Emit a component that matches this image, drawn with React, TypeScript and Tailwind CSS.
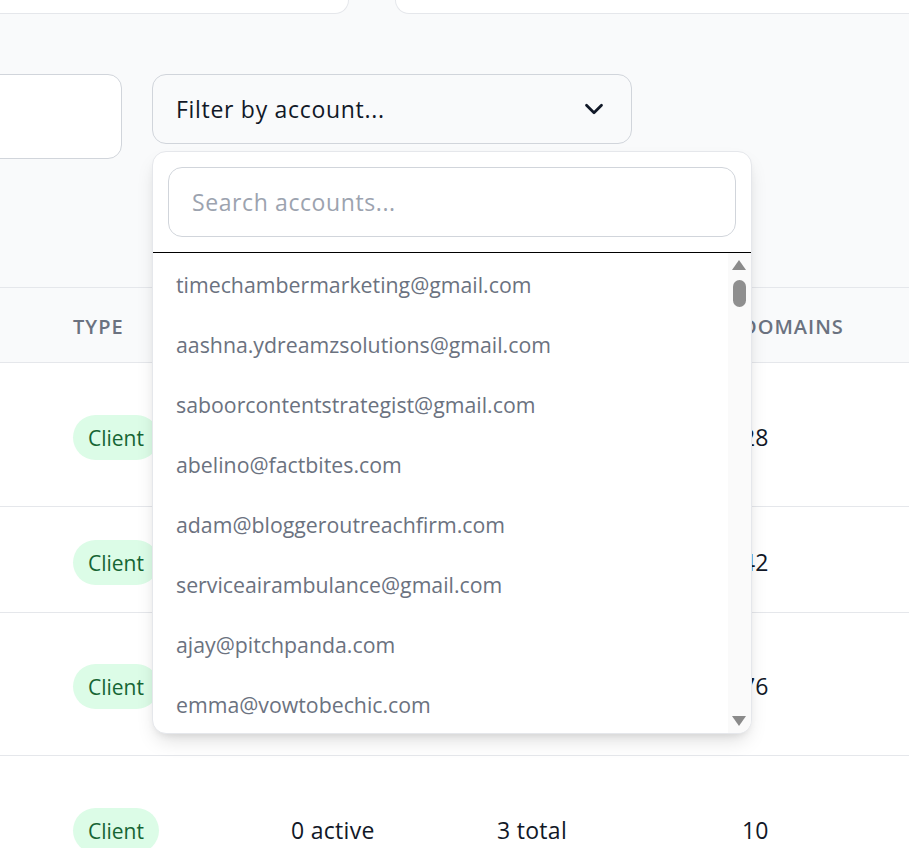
import React from "react";

const emails = [
  "timechambermarketing@gmail.com",
  "aashna.ydreamzsolutions@gmail.com",
  "saboorcontentstrategist@gmail.com",
  "abelino@factbites.com",
  "adam@bloggeroutreachfirm.com",
  "serviceairambulance@gmail.com",
  "ajay@pitchpanda.com",
  "emma@vowtobechic.com",
];

const rows = [
  { h: "h-[144px] pt-[5px]", active: "", total: "", domains: "28" },
  { h: "h-[106px] pt-[5px]", active: "", total: "", domains: "42" },
  { h: "h-[143px] pt-[5px]", active: "", total: "", domains: "76" },
  { h: "h-[148px] pt-[1px]", active: "0 active", total: "3 total", domains: "10" },
];

function Badge() {
  return (
    <span className="inline-flex h-[45px] items-center rounded-full bg-[#dcfce7] px-[15px] pt-[3px] text-[21px] text-[#166534]">
      Client
    </span>
  );
}

export default function App() {
  return (
    <div
      className="relative h-[848px] w-[909px] overflow-hidden bg-[#f9fafb]"
      style={{ fontFamily: '"Open Sans", "Noto Sans", sans-serif' }}
    >
      {/* top cards */}
      <div className="flex h-[14px] gap-[46px]">
        <div className="-ml-[30px] h-[14px] w-[379px] rounded-b-[14px] border-b border-r border-[#e5e7eb] bg-white" />
        <div className="-mr-[30px] h-[14px] flex-1 rounded-b-[14px] border-b border-l border-[#e5e7eb] bg-white" />
      </div>

      {/* filter row */}
      <div className="mt-[60px] flex items-start gap-[30px]">
        <div className="-ml-[41px] h-[85px] w-[163px] rounded-[14px] border border-[#d1d5db] bg-white" />
        <div className="relative">
          <div className="flex h-[70px] w-[480px] items-center justify-between rounded-[14px] border border-[#d1d5db] bg-[#f9fafb] pl-[23px] pr-[22px]">
            <span className="text-[23px] tracking-[0.7px] text-[#111827]">Filter by account...</span>
            <svg width="30" height="30" viewBox="0 0 24 24" fill="none" stroke="#111827" strokeWidth="2.2" strokeLinecap="round" strokeLinejoin="round">
              <path d="m6 9 6 6 6-6" />
            </svg>
          </div>

          {/* dropdown */}
          <div className="absolute left-0 top-[77px] z-10 w-[600px] overflow-hidden rounded-[14px] border border-[#e5e7eb] bg-white shadow-[0_10px_20px_-5px_rgba(0,0,0,0.15),0_4px_8px_-4px_rgba(0,0,0,0.1)]">
            <div className="border-b border-black px-[15px] pb-[15px] pt-[15px]">
              <div className="flex h-[70px] items-center rounded-[14px] border border-[#d1d5db] bg-white px-[23px] text-[23px] tracking-[0.6px] text-[#9ca3af]">
                Search accounts...
              </div>
            </div>
            <div className="relative h-[480px] overflow-hidden">
              {emails.map((e) => (
                <div key={e} className="flex h-[60px] items-center px-[23px] pt-[3px] text-[21.3px] text-[#6b7280]">
                  {e}
                </div>
              ))}
              {/* scrollbar */}
              <div className="absolute bottom-0 right-0 top-0 w-[23px] bg-[#fafafa]">
                <svg className="absolute left-[4px] top-[7px]" width="14" height="10" viewBox="0 0 14 10">
                  <path d="M7 0 L14 10 L0 10 Z" fill="#8a8a8a" />
                </svg>
                <div className="absolute left-[5px] top-[27px] h-[27px] w-[13px] rounded-full bg-[#8f8f8f]" />
                <svg className="absolute bottom-[7px] left-[4px]" width="14" height="10" viewBox="0 0 14 10">
                  <path d="M0 0 L14 0 L7 10 Z" fill="#8a8a8a" />
                </svg>
              </div>
            </div>
          </div>
        </div>
      </div>

      {/* table */}
      <div className="mt-[128px]">
        <div className="grid h-[76px] grid-cols-[218px_206px_245px_1fr] items-center border-y border-[#e5e7eb] bg-[#f9fafb] pl-[73px] pt-[3px] text-[20px] font-semibold uppercase tracking-[0.05em] text-[#6b7280]">
          <div>Type</div>
          <div />
          <div />
          <div>Domains</div>
        </div>
        {rows.map((r, i) => (
          <div
            key={i}
            className={`grid ${r.h} grid-cols-[218px_206px_245px_1fr] items-center border-b border-[#e5e7eb] bg-white pl-[73px] text-[23px] text-[#111827]`}
          >
            <div>
              <Badge />
            </div>
            <div className="tracking-[0.3px]">{r.active}</div>
            <div className="tracking-[0.3px]">{r.total}</div>
            <div>{r.domains}</div>
          </div>
        ))}
      </div>
    </div>
  );
}
